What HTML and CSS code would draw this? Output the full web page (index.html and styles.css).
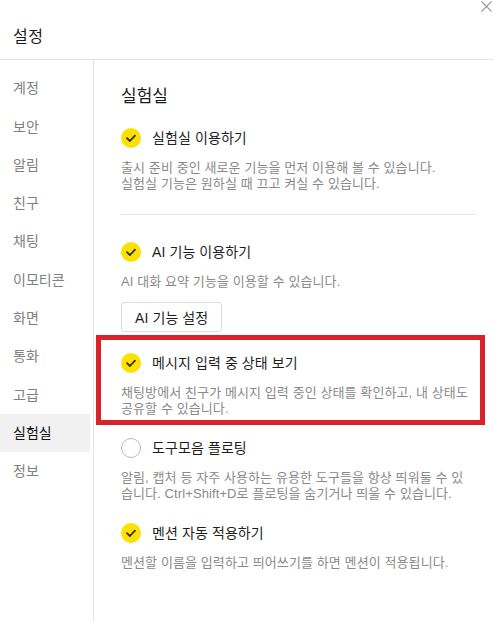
FILE: index.html
```
<!DOCTYPE html>
<html>

<head>
    <meta charset="utf-8">
    <title>설정</title>
    <link rel="stylesheet" href="styles.css">
</head>

<body>
    <div class="header">
        <div class="topbar">
            <a class="close" href="javascript:void(0)">
                <svg width="11" height="11" viewBox="0 0 11 11">
                    <path d="M0.5 0.5 L10.5 10.5 M10.5 0.5 L0.5 10.5" stroke="#9a9a9a" stroke-width="1.1" fill="none"/>
                </svg>
            </a>
        </div>
        <h1 class="title">설정</h1>
    </div>
    <div class="main">
        <ul class="sidebar">
            <li><a href="javascript:void(0)">계정</a></li>
            <li><a href="javascript:void(0)">보안</a></li>
            <li><a href="javascript:void(0)">알림</a></li>
            <li><a href="javascript:void(0)">친구</a></li>
            <li><a href="javascript:void(0)">채팅</a></li>
            <li><a href="javascript:void(0)">이모티콘</a></li>
            <li><a href="javascript:void(0)">화면</a></li>
            <li><a href="javascript:void(0)">통화</a></li>
            <li><a href="javascript:void(0)">고급</a></li>
            <li class="current"><a href="javascript:void(0)">실험실</a></li>
            <li><a href="javascript:void(0)">정보</a></li>
        </ul>
        <div class="content">
            <h2 class="heading">실험실</h2>

            <div class="item">
                <div class="row">
                    <span class="check on">
                        <svg width="20" height="20" viewBox="0 0 20 20"><circle cx="10" cy="10" r="10" fill="#fbe100"/><path d="M6 10.2 L8.9 13 L14 7.6" stroke="#3a2a1c" stroke-width="1.8" fill="none" stroke-linecap="round" stroke-linejoin="round"/></svg>
                    </span>
                    <span class="label">실험실 이용하기</span>
                </div>
                <p class="desc">출시 준비 중인 새로운 기능을 먼저 이용해 볼 수 있습니다.<br>실험실 기능은 원하실 때 끄고 켜실 수 있습니다.</p>
            </div>

            <div class="line"></div>

            <div class="item first">
                <div class="row">
                    <span class="check on">
                        <svg width="20" height="20" viewBox="0 0 20 20"><circle cx="10" cy="10" r="10" fill="#fbe100"/><path d="M6 10.2 L8.9 13 L14 7.6" stroke="#3a2a1c" stroke-width="1.8" fill="none" stroke-linecap="round" stroke-linejoin="round"/></svg>
                    </span>
                    <span class="label">AI 기능 이용하기</span>
                </div>
                <p class="desc">AI 대화 요약 기능을 이용할 수 있습니다.</p>
                <button class="btn">AI 기능 설정</button>
            </div>

            <div class="item marked">
                <div class="row">
                    <span class="check on">
                        <svg width="20" height="20" viewBox="0 0 20 20"><circle cx="10" cy="10" r="10" fill="#fbe100"/><path d="M6 10.2 L8.9 13 L14 7.6" stroke="#3a2a1c" stroke-width="1.8" fill="none" stroke-linecap="round" stroke-linejoin="round"/></svg>
                    </span>
                    <span class="label">메시지 입력 중 상태 보기</span>
                </div>
                <p class="desc">채팅방에서 친구가 메시지 입력 중인 상태를 확인하고, 내 상태도<br>공유할 수 있습니다.</p>
            </div>

            <div class="item">
                <div class="row">
                    <span class="check off"></span>
                    <span class="label">도구모음 플로팅</span>
                </div>
                <p class="desc">알림, 캡처 등 자주 사용하는 유용한 도구들을 항상 띄워둘 수 있<br>습니다. Ctrl+Shift+D로 플로팅을 숨기거나 띄울 수 있습니다.</p>
            </div>

            <div class="item">
                <div class="row">
                    <span class="check on">
                        <svg width="20" height="20" viewBox="0 0 20 20"><circle cx="10" cy="10" r="10" fill="#fbe100"/><path d="M6 10.2 L8.9 13 L14 7.6" stroke="#3a2a1c" stroke-width="1.8" fill="none" stroke-linecap="round" stroke-linejoin="round"/></svg>
                    </span>
                    <span class="label">멘션 자동 적용하기</span>
                </div>
                <p class="desc">멘션할 이름을 입력하고 띄어쓰기를 하면 멘션이 적용됩니다.</p>
            </div>
        </div>
    </div>
</body>

</html>
```

FILE: styles.css
```
*{
    padding: 0;
    margin: 0;
    box-sizing: border-box;
}
ul{
    list-style: none;
}
a{
    text-decoration: none;
}
html,body{
    width: 100%;
    height: 100%;
}
body{
    display: flex;
    flex-direction: column;
    background-color: #fff;
    color: #1e1e1e;
    font-family: "Liberation Sans", "Noto Sans CJK KR", sans-serif;
    overflow: hidden;
}
.header{
    height: 60px;
    flex-shrink: 0;
    border-bottom: 1px solid #e4e4e4;
}
.topbar{
    display: flex;
    justify-content: flex-end;
    height: 22px;
    padding: 1px 2px 0 0;
}
.close{
    display: block;
    width: 11px;
    height: 11px;
}
.close svg{
    display: block;
}
.title{
    padding-left: 13px;
    font-size: 16px;
    font-weight: 400;
    line-height: 30px;
    letter-spacing: 0.5px;
    color: #1a1a1a;
}
.main{
    flex: 1;
    display: flex;
}
.sidebar{
    width: 94px;
    flex-shrink: 0;
    padding-top: 9.3px;
    border-right: 1px solid #e4e4e4;
}
.sidebar li{
    height: 38.3px;
    margin-right: 3px;
}
.sidebar li a{
    display: block;
    padding-left: 13px;
    line-height: 38.3px;
    font-size: 14px;
    color: #808080;
}
.sidebar li.current{
    background-color: #f1f1f1;
}
.sidebar li.current a{
    color: #111;
}
.content{
    flex: 1;
    padding: 26px 18px 0 27px;
}
.heading{
    font-size: 17px;
    font-weight: 400;
    line-height: 22px;
    margin-bottom: 20px;
    color: #1a1a1a;
}
.item{
    margin-top: 21px;
}
.heading + .item{
    margin-top: 0;
}
.item.first{
    margin-top: 27px;
}
.row{
    display: flex;
    align-items: center;
    height: 20px;
}
.check{
    width: 20px;
    height: 20px;
    margin-right: 11px;
    border-radius: 50%;
    flex-shrink: 0;
}
.check svg{
    display: block;
}
.check.off{
    border: 1px solid #b9b9b9;
}
.label{
    font-size: 14px;
    line-height: 20px;
    letter-spacing: 0.1px;
    color: #1e1e1e;
}
.desc{
    margin-top: 12px;
    font-size: 13px;
    line-height: 16px;
    letter-spacing: 0.1px;
    color: #8a8a8a;
    white-space: nowrap;
}
.line{
    height: 1px;
    margin-top: 22px;
    background-color: #e6e6e6;
}
.btn{
    display: block;
    height: 30px;
    margin-top: 12px;
    padding: 0 13px;
    border: 1px solid #dcdcdc;
    border-radius: 3px;
    background-color: #fff;
    font-family: "Liberation Sans", "Noto Sans CJK KR", sans-serif;
    font-size: 14px;
    letter-spacing: 0.1px;
    color: #1e1e1e;
}
.item.marked{
    position: relative;
}
.item.marked::after{
    content: "";
    position: absolute;
    left: -25px;
    right: -9px;
    top: -18px;
    bottom: -8px;
    border: 5px solid #d8232b;
}
```
